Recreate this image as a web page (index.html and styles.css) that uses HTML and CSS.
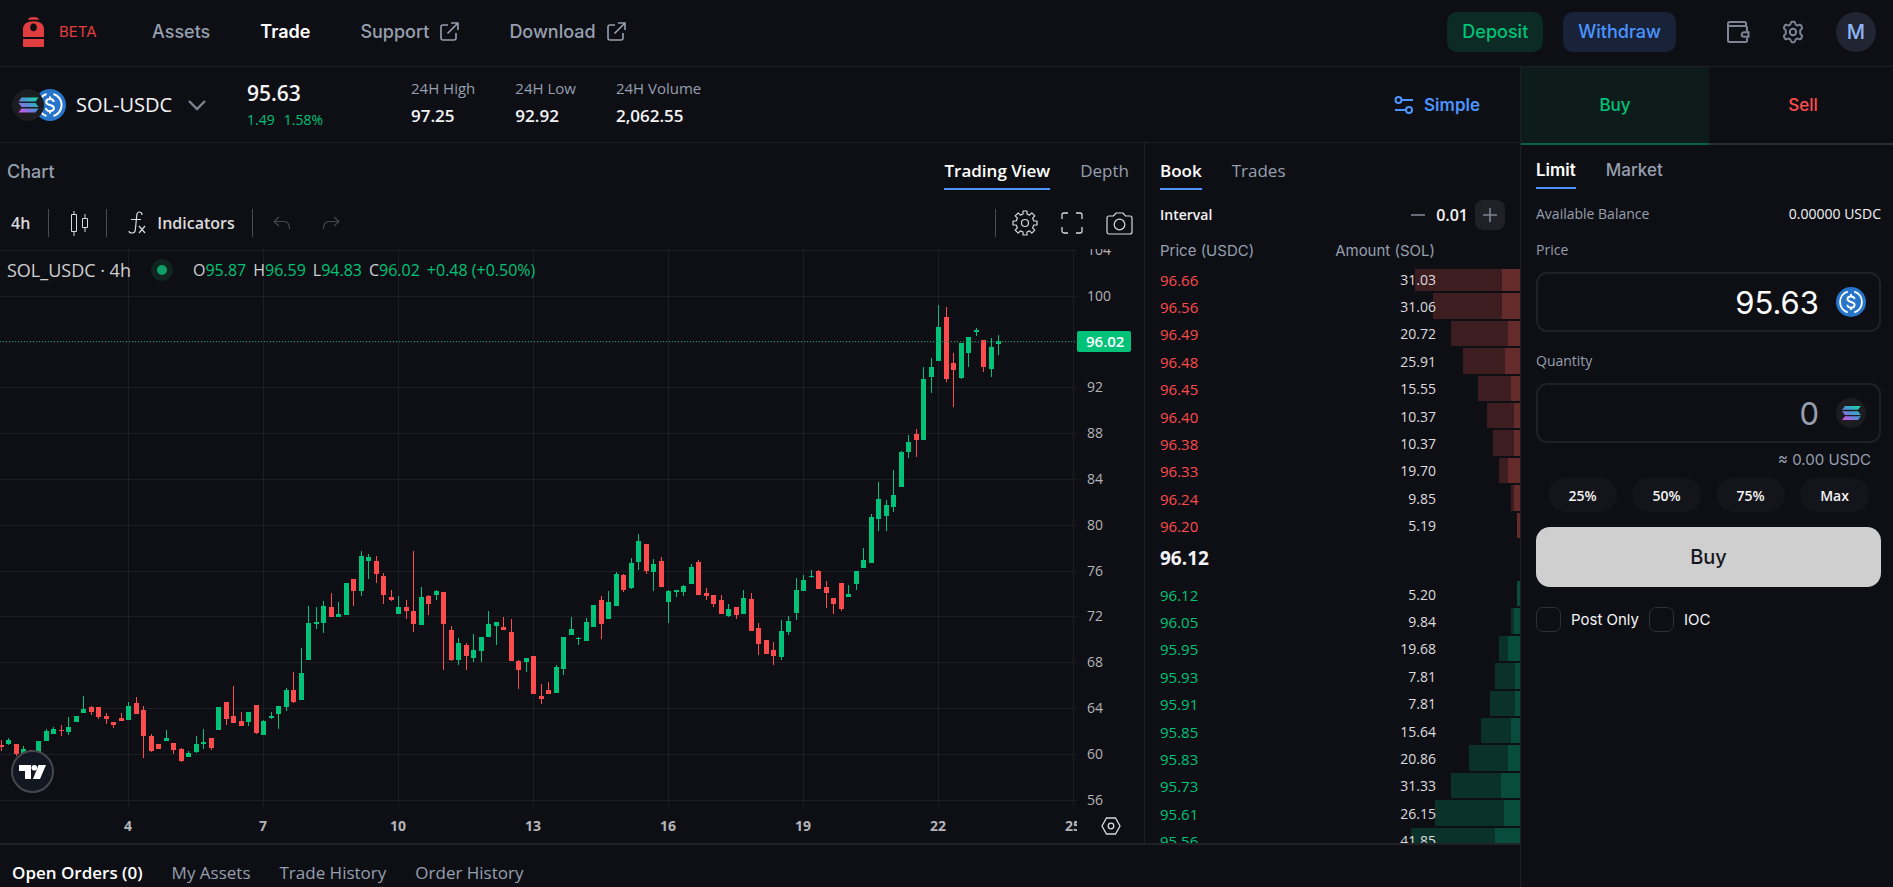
FILE: index.html
```html
<!DOCTYPE html>
<html lang="en">
<head>
  <meta charset="UTF-8" />
  <meta name="viewport" content="width=device-width, initial-scale=1.0" />
  <title>SOL-USDC | Trade</title>
  <link rel="stylesheet" href="styles.css">
</head>
<body>
  <!-- shared symbols -->
  <svg class="defs" aria-hidden="true">
    <defs>
      <linearGradient id="sol-gradient" x1="0" y1="1" x2="1" y2="0">
        <stop offset="0" stop-color="#e04be8" />
        <stop offset="0.5" stop-color="#4f8fd6" />
        <stop offset="1" stop-color="#0fe0a4" />
      </linearGradient>
      <symbol id="icon-sol" viewBox="0 0 32 32">
        <circle cx="16" cy="16" r="16" fill="#1c1c21" />
        <path d="M10 9h17l-3 4H7zM7 14.5h17l3 4H10zM10 20h17l-3 4H7z" transform="translate(-0.5 -0.5)" fill="url(#sol-gradient)" />
      </symbol>
      <symbol id="icon-usdc" viewBox="0 0 32 32">
        <circle cx="16" cy="16" r="16" fill="#2775ca" />
        <path d="M12.5 5a11.5 11.5 0 0 0 0 22M19.500 5a11.500 11.500 0 0 1 0 22" fill="none" stroke="#fff" stroke-width="2" />
        <path d="M16 7.500v2.500M16 22v2.500M19.800 13c-.2-1.900-1.700-2.900-3.800-2.900s-3.800 1-3.800 2.800c0 4.200 7.700 2 7.700 6.200 0 1.800-1.700 2.900-3.900 2.900s-3.900-1.100-4-3" fill="none" stroke="#fff" stroke-width="2" />
      </symbol>
      <symbol id="icon-external" viewBox="0 0 20 20">
        <path d="M9 3H4a2 2 0 0 0-2 2v11a2 2 0 0 0 2 2h11a2 2 0 0 0 2-2v-5M12 1h7v7M19 1 8.500 11.500" fill="none" stroke="currentColor" stroke-width="1.600" />
      </symbol>
    </defs>
  </svg>

  <header class="topbar">
    <a class="logo" href="#">
      <svg width="21" height="30" viewBox="0 0 21 30" aria-hidden="true">
        <path d="M5 2.700c.5-2 2.500-2.700 5.500-2.700S15.500.7 16 2.700z" />
        <path fill-rule="evenodd" d="M0 19v-6.500C0 7 4 4.300 10.500 4.300S21 7 21 12.500V19a1 1 0 0 1-1 1H1a1 1 0 0 1-1-1zM10.500 6.600a3.300 3.800 0 1 0 0 7.600 3.300 3.800 0 0 0 0-7.600z" />
        <path d="M0 22h21v7a1 1 0 0 1-1 1H1a1 1 0 0 1-1-1z" />
      </svg>
      <span>BETA</span>
    </a>
    <nav class="nav">
      <a href="#">Assets</a>
      <a href="#" class="active">Trade</a>
      <a href="#">Support <svg width="20" height="20"><use href="#icon-external" /></svg></a>
      <a href="#">Download <svg width="20" height="20"><use href="#icon-external" /></svg></a>
    </nav>
    <div class="actions">
      <button class="btn deposit">Deposit</button>
      <button class="btn withdraw">Withdraw</button>
      <button class="icon-btn wallet" aria-label="Wallet">
        <svg width="24" height="24" viewBox="0 0 24 24" fill="none" stroke="currentColor" stroke-width="2">
          <path d="M20 7V3.500A1.500 1.500 0 0 0 18.500 2H3.500A1.500 1.500 0 0 0 2 3.500v17A1.500 1.500 0 0 0 3.500 22h16a1.500 1.500 0 0 0 1.500-1.500V18M2 6h17a2 2 0 0 1 2 2v4M18 12.200h4.500v4.600H18a2.300 2.300 0 0 1 0-4.600z" />
        </svg>
      </button>
      <button class="icon-btn" aria-label="Settings">
        <svg width="24" height="24" viewBox="0 0 24 24" fill="none" stroke="currentColor" stroke-width="2" stroke-linejoin="round">
          <path d="M9.600 3.900c.2-1.100.6-2.100 1.300-2.100h2.200c.7 0 1.100 1 1.300 2.100.1.700.9 1.200 1.500 1.400 1 .4 1.600-.2 2.600-.5.700-.2 1.100 0 1.400.5l1.100 1.900c.3.600.2 1-.3 1.500-.8.700-1.500 1.200-1.500 2v2.600c0 .8.700 1.300 1.500 2 .5.500.6.900.3 1.500l-1.100 1.900c-.3.500-.7.700-1.400.5-1-.3-1.600-.9-2.600-.5-.6.200-1.400.7-1.500 1.400-.2 1.100-.6 2.100-1.300 2.100h-2.200c-.7 0-1.100-1-1.300-2.100-.1-.7-.9-1.200-1.500-1.400-1-.4-1.600.2-2.600.5-.7.2-1.100 0-1.400-.5L3 16.800c-.3-.6-.2-1 .3-1.500.8-.7 1.500-1.200 1.500-2v-2.600c0-.8-.7-1.300-1.500-2-.5-.5-.6-.9-.3-1.500l1.100-1.900c.3-.5.7-.7 1.400-.5 1 .3 1.600.9 2.600.5.600-.2 1.400-.7 1.500-1.400z" />
          <circle cx="12" cy="12" r="3.200" />
        </svg>
      </button>
      <button class="avatar">M</button>
    </div>
  </header>

  <main class="layout">
    <section class="market">
      <div class="ticker">
        <button class="pair">
          <span class="pair-icons">
            <svg width="32" height="32"><use href="#icon-sol" /></svg>
            <svg width="32" height="32"><use href="#icon-usdc" /></svg>
          </span>
          <span>SOL-USDC</span>
          <svg width="20" height="12" viewBox="0 0 20 12" fill="none" stroke="#7d8494" stroke-width="2.400"><path d="m2 2 8 8 8-8" /></svg>
        </button>
        <div class="last">
          <strong>95.63</strong>
          <p><span>1.49</span><span>1.58%</span></p>
        </div>
        <dl class="stats">
          <div><dt>24H High</dt><dd>97.25</dd></div>
          <div><dt>24H Low</dt><dd>92.92</dd></div>
          <div><dt>24H Volume</dt><dd>2,062.55</dd></div>
        </dl>
        <button class="simple">
          <svg width="20" height="20" viewBox="0 0 20 20" fill="none" stroke="currentColor" stroke-width="2">
            <circle cx="4.500" cy="5" r="3" /><path d="M8 5h11" />
            <circle cx="15" cy="15" r="3" /><path d="M1 15h11" />
          </svg>
          Simple
        </button>
      </div>

      <div class="panels">
        <section class="chart">
          <div class="chart-head">
            <h2>Chart</h2>
            <div class="tabs">
              <button class="tab active">Trading View</button>
              <button class="tab">Depth</button>
            </div>
          </div>
          <div class="toolbar">
            <button class="interval">4h</button>
            <i class="sep"></i>
            <button class="candles" aria-label="Candles">
              <svg width="18" height="26" viewBox="0 0 18 26" fill="none" stroke="currentColor"><path d="M.5 4.500h5v17h-5zM3 1v3M3 22v4M11.500 8.500h5v9h-5zM14 4v4M14 18v4" /></svg>
            </button>
            <i class="sep"></i>
            <button class="indicators">
              <svg width="18" height="24" viewBox="0 0 18 24" fill="none" stroke="currentColor" stroke-width="1.200"><path d="M14 4V3.500C14 2 13 1 11.500 1S9 2 8.800 4L7.300 19c-.2 2-1.300 3-3 3S1 21.500 1 20M3 8.500h10M11 15l6 7M17 15l-6 7" /></svg>
              Indicators
            </button>
            <i class="sep"></i>
            <button class="history undo" aria-label="Undo">
              <svg width="18" height="14" viewBox="0 0 18 14" fill="none" stroke="currentColor" stroke-width="1.200"><path d="M6 1 1 5.500 6 10M1 5.500h10c3.500 0 5.500 2.500 5.500 7.500" /></svg>
            </button>
            <button class="history" aria-label="Redo">
              <svg width="18" height="14" viewBox="0 0 18 14" fill="none" stroke="currentColor" stroke-width="1.200"><path d="m12 1 5 4.500L12 10M17 5.500H7C3.500 5.500 1.500 8 1.500 13" /></svg>
            </button>
            <div class="toolbar-right">
              <i class="sep"></i>
              <button aria-label="Chart settings">
                <svg width="26" height="26" viewBox="0 0 26 26" fill="none" stroke="currentColor" stroke-width="1.200">
                  <path d="M11 1h4v3l2.600 1.100 2.200-2.200 3 3-2.200 2.200L21.800 11H25v4h-3.200l-1.200 2.900 2.200 2.200-3 3-2.200-2.200L15 22v3h-4v-3l-2.600-1.100-2.200 2.200-3-3 2.200-2.200L4.200 15H1v-4h3.200l1.200-2.900-2.200-2.200 3-3 2.200 2.200L11 4z" stroke-linejoin="round" />
                  <circle cx="13" cy="13" r="3.500" />
                </svg>
              </button>
              <button aria-label="Fullscreen">
                <svg width="22" height="22" viewBox="0 0 22 22" fill="none" stroke="currentColor" stroke-width="1.300"><path d="M1 7V3a2 2 0 0 1 2-2h4M15 1h4a2 2 0 0 1 2 2v4M21 15v4a2 2 0 0 1-2 2h-4M7 21H3a2 2 0 0 1-2-2v-4" /></svg>
              </button>
              <button aria-label="Snapshot">
                <svg width="27" height="23" viewBox="0 0 27 23" fill="none" stroke="currentColor" stroke-width="1.200"><path d="M1 20V6a2 2 0 0 1 2-2h4.500L10 1h7l2.500 3H24a2 2 0 0 1 2 2v14a2 2 0 0 1-2 2H3a2 2 0 0 1-2-2z" /><circle cx="13.500" cy="12.500" r="5.300" /></svg>
              </button>
            </div>
          </div>
          <div class="plot">
            <svg id="plot" role="img" aria-label="SOL_USDC price chart"></svg>
            <div class="legend">
              <span class="symbol">SOL_USDC · 4h</span>
              <i class="live"></i>
              <span>O<b>95.87</b></span>
              <span>H<b>96.59</b></span>
              <span>L<b>94.83</b></span>
              <span>C<b>96.02</b></span>
              <span><b>+0.48 (+0.50%)</b></span>
            </div>
            <a class="tv-logo" href="#" aria-label="TradingView">
              <svg width="27" height="14" viewBox="0 0 27 14" fill="#fff"><path d="M0 0h12v14H6V6H0zM19.500 0H27l-6 14h-7z" /><circle cx="15.300" cy="2.800" r="2.800" /></svg>
            </a>
            <button class="axis-settings" aria-label="Scale settings">
              <svg width="20" height="18" viewBox="0 0 20 18" fill="none" stroke="currentColor" stroke-width="1.300"><path d="M5.500 1h9L19 9l-4.500 8h-9L1 9z" /><circle cx="10" cy="9" r="2.800" /></svg>
            </button>
          </div>
        </section>

        <section class="book">
          <div class="tabs">
            <button class="tab active">Book</button>
            <button class="tab">Trades</button>
          </div>
          <div class="book-interval">
            <span>Interval</span>
            <div class="stepper">
              <button aria-label="Decrease"><svg width="16" height="16" viewBox="0 0 16 16"><path d="M1 8h14" stroke="currentColor" stroke-width="1.600" /></svg></button>
              <output>0.01</output>
              <button class="plus" aria-label="Increase"><svg width="16" height="16" viewBox="0 0 16 16"><path d="M1 8h14M8 1v14" stroke="currentColor" stroke-width="1.600" /></svg></button>
            </div>
          </div>
          <div class="book-head"><span>Price (USDC)</span><span>Amount (SOL)</span></div>
          <div class="book-body">
            <table class="levels asks" id="asks"></table>
            <p class="mid">96.12</p>
            <table class="levels bids" id="bids"></table>
          </div>
        </section>
      </div>

      <div class="orders-tabs">
        <button class="active">Open Orders (0)</button>
        <button>My Assets</button>
        <button>Trade History</button>
        <button>Order History</button>
      </div>
    </section>

    <aside class="ticket">
      <div class="sides">
        <button class="side buy">Buy</button>
        <button class="side sell">Sell</button>
      </div>
      <form class="form">
        <div class="tabs">
          <button type="button" class="tab active">Limit</button>
          <button type="button" class="tab">Market</button>
        </div>
        <p class="balance"><span>Available Balance</span><span>0.00000 USDC</span></p>
        <label for="price">Price</label>
        <div class="field">
          <input id="price" type="text" value="95.63">
          <svg width="30" height="30"><use href="#icon-usdc" /></svg>
        </div>
        <label for="quantity">Quantity</label>
        <div class="field">
          <input id="quantity" type="text" placeholder="0">
          <svg width="30" height="30"><use href="#icon-sol" /></svg>
        </div>
        <p class="approx">≈ 0.00 USDC</p>
        <div class="percents">
          <button type="button">25%</button>
          <button type="button">50%</button>
          <button type="button">75%</button>
          <button type="button">Max</button>
        </div>
        <button type="button" class="submit">Buy</button>
        <div class="options">
          <input type="checkbox" id="post-only"><label for="post-only">Post Only</label>
          <input type="checkbox" id="ioc"><label for="ioc">IOC</label>
        </div>
      </form>
    </aside>
  </main>

  <script src="script.js"></script>
</body>
</html>
```
FILE: styles.css
```css
* { box-sizing: border-box; margin: 0; padding: 0; }

:root {
  --bg: #0e0f14;
  --line: #202127;
  --text: #f4f4f6;
  --muted: #969faf;
  --green: #00c278;
  --red: #fd4b4e;
  --blue: #4c94ff;
  --ui: "Open Sans", "Noto Sans", sans-serif;
  --inter: Inter, "Noto Sans", sans-serif;
}

body {
  height: 100vh;
  display: flex;
  flex-direction: column;
  overflow: hidden;
  background: var(--bg);
  color: var(--text);
  font: 14px/20px var(--ui);
}

button { background: none; border: 0; color: inherit; font: inherit; cursor: pointer; }
a { color: inherit; text-decoration: none; }
svg { display: block; flex: none; }
.defs { position: absolute; width: 0; height: 0; }

/* top bar */
.topbar {
  display: flex;
  align-items: center;
  height: 67px;
  padding: 0 17px 3px 23px;
  border-bottom: 1px solid var(--line);
  font-family: var(--inter);
}
.logo { display: flex; align-items: center; gap: 15px; width: 129px; color: #e33e3f; font-size: 15px; }
.logo svg { fill: #e33e3f; }
.nav { display: flex; gap: 50px; font-size: 18px; font-weight: 500; color: var(--muted); }
.nav a { display: flex; align-items: center; gap: 10px; }
.nav .active { color: #fff; font-weight: 600; }
.actions { display: flex; align-items: center; margin-left: auto; }
.btn { height: 40px; padding: 0 15px; border-radius: 10px; font-size: 18px; font-weight: 500; }
.deposit { background: #0c2b25; color: var(--green); margin-right: 20px; }
.withdraw { background: #18233a; color: var(--blue); margin-right: 50px; }
.icon-btn { color: #7d8494; margin-right: 31px; }
.avatar { width: 40px; height: 40px; border-radius: 50%; background: #202433; color: #90b5f5; font-size: 20px; font-weight: 500; }

/* page grid */
.layout { flex: 1; min-height: 0; display: grid; grid-template-columns: minmax(0, 1fr) 373px; }
.market { display: flex; flex-direction: column; min-height: 0; }

/* ticker */
.ticker { display: flex; align-items: center; height: 76px; padding: 0 40px 0 12px; border-bottom: 1px solid var(--line); }
.pair { display: flex; align-items: center; width: 235px; font-size: 20px; font-weight: 500; }
.pair > svg { margin-left: 15px; }
.pair-icons { display: flex; margin-right: 10px; }
.pair-icons svg:first-child { position: relative; z-index: 1; margin-right: -10px; }
.last { width: 164px; padding-top: 3px; }
.last strong { display: block; font-size: 21px; line-height: 28px; font-weight: 600; }
.last p { display: flex; gap: 9px; color: var(--green); font-weight: 500; line-height: 26px; }
.stats { display: flex; gap: 40px; padding-bottom: 5px; }
.stats dt { color: var(--muted); font-size: 15px; line-height: 28px; }
.stats dd { font-size: 17px; font-weight: 600; line-height: 28px; }
.simple { display: flex; align-items: center; gap: 10px; margin-left: auto; color: var(--blue); font: 600 17px/24px var(--inter); }

.panels { flex: 1; min-height: 0; display: grid; grid-template-columns: minmax(0, 1fr) 375px; border-bottom: 2px solid var(--line); }

/* tabs */
.tabs { display: flex; gap: 30px; }
.tab { padding: 0 0 5px; border-bottom: 2px solid transparent; color: var(--muted); font-size: 17px; line-height: 24px; font-weight: 500; }
.tab.active { color: #fff; border-color: var(--blue); font-weight: 600; }

/* chart */
.chart { display: flex; flex-direction: column; min-height: 0; border-right: 1px solid var(--line); }
.chart-head { display: flex; justify-content: space-between; padding: 16px 15px 0 7px; }
.chart-head h2 { color: var(--muted); font: 500 18px/26px var(--inter); }
.toolbar { display: flex; align-items: center; height: 59px; padding: 7px 11px 0; color: #dadadd; font-size: 16px; font-weight: 600; }
.sep { width: 1px; height: 28px; background: #4b4c50; }
.interval { margin-right: 18px; }
.candles { margin: 0 17px 0 22px; }
.indicators { display: flex; align-items: center; gap: 11px; margin: 0 17px 0 21px; }
.history { color: #46474c; margin-left: 31px; }
.undo { margin-left: 20px; }
.toolbar-right { display: flex; align-items: center; gap: 23px; margin-left: auto; }
.toolbar-right .sep { margin-right: -7px; }
.plot { flex: 1; min-height: 0; position: relative; }
#plot { width: 100%; height: 100%; }
#plot text { font: 14px var(--ui); fill: #b4b4b8; }
#plot .time { font-weight: 700; text-anchor: middle; }
#plot .tag { fill: #fff; font-size: 15px; font-weight: 600; }
.grid-line { stroke: #1d1e23; }
.up { fill: var(--green); }
.down { fill: var(--red); }
.price-line { stroke: #129a68; stroke-dasharray: 1 2; }
.legend { position: absolute; top: 8px; left: 7px; display: flex; align-items: center; gap: 7px; color: #d0d0d3; font-size: 16px; line-height: 26px; }
.legend b { font-weight: 400; color: var(--green); }
.legend .symbol { font-size: 18px; }
.live { width: 22px; height: 22px; margin: 0 13px; border: 6px solid #10251f; border-radius: 50%; background: #0e9f69; }
.tv-logo { position: absolute; left: 11px; bottom: 50px; width: 43px; height: 43px; display: grid; place-items: center; border: 2px solid #46474d; border-radius: 50%; background: #131722; }
.axis-settings { position: absolute; right: 23px; bottom: 8px; color: #dadadd; }

/* order book */
.book { display: flex; flex-direction: column; min-height: 0; }
.book .tabs { padding: 16px 15px 0; }
.book-interval { display: flex; align-items: center; justify-content: space-between; height: 46px; padding: 4px 15px 0; font-weight: 600; }
.stepper { display: flex; align-items: center; color: #7d8494; }
.stepper output { margin: 0 7px 0 10px; color: var(--text); font-size: 16px; }
.plus { display: grid; place-items: center; width: 30px; height: 30px; border-radius: 8px; background: #202127; }
.book-head { display: flex; justify-content: space-between; margin-bottom: 3px; padding: 0 85px 0 15px; color: var(--muted); font: 15px/30px var(--inter); }
.book-body { flex: 1; min-height: 0; overflow: hidden; }
.levels { width: 100%; height: 274px; border-collapse: collapse; }
.asks { margin-top: -3px; }
.levels tr { position: relative; }
.levels td { padding: 0; line-height: 20px; }
.levels td:first-child { padding-left: 15px; font-size: 15px; font-weight: 500; }
.levels td:nth-child(2) { position: relative; z-index: 1; padding-right: 84px; text-align: right; color: #dcdcdf; }
.asks td:first-child { color: var(--red); }
.bids td:first-child { color: var(--green); }
.depth { width: 0; }
.depth i { position: absolute; top: 0; right: 0; bottom: 2px; }
.asks .total { background: #3d1d20; }
.asks .size { background: #652a2a; }
.bids .total { background: #0b312b; }
.bids .size { background: #084c3d; }
.mid { margin-bottom: 5px; padding-left: 15px; font-size: 19px; font-weight: 700; line-height: 36px; }

/* orders */
.orders-tabs { display: flex; gap: 29px; height: 42px; padding: 14px 12px 0; color: var(--muted); font-size: 17px; font-weight: 500; }
.orders-tabs .active { color: #fff; font-weight: 600; }

/* order ticket */
.ticket { border-left: 1px solid var(--line); overflow: hidden; font-family: var(--inter); }
.sides { display: flex; }
.side { flex: 1 0 188px; height: 78px; border-bottom: 2px solid #2c2d33; font-size: 17px; font-weight: 500; }
.buy { background: #0d1c1b; border-color: #056443; color: var(--green); }
.sell { color: var(--red); }
.form { padding: 13px 12px 0 15px; }
.balance { display: flex; justify-content: space-between; margin: 15px 0 16px; font-family: var(--ui); }
.balance span:first-child, .form > label { color: var(--muted); }
.form > label { display: block; font-family: var(--ui); }
.field { display: flex; align-items: center; gap: 17px; height: 60px; margin: 12px 0 19px; padding: 0 13px; border: 2px solid var(--line); border-radius: 11px; }
.field input { flex: 1; min-width: 0; background: none; border: 0; outline: 0; color: #fff; font: 31px var(--inter); text-align: right; }
.field input::placeholder { color: var(--muted); opacity: 1; }
.approx { margin: -12px 10px 8px; color: var(--muted); text-align: right; font-size: 15px; }
.percents { display: flex; justify-content: space-between; padding: 0 12px; }
.percents button { width: 69px; height: 34px; border-radius: 17px; background: #14151a; font: 600 14px var(--ui); }
.submit { display: block; width: 100%; height: 60px; margin: 15px 0 20px; border-radius: 14px; background: #cfcfcf; color: #16171c; font-size: 20px; font-weight: 500; }
.options { display: flex; align-items: center; gap: 10px; font-size: 15px; }
.options input { appearance: none; width: 25px; height: 25px; border: 1px solid #2f3036; border-radius: 7px; }
```
FILE: script.js
```js
const SVG = "http://www.w3.org/2000/svg";
const STEP = 7.5;
const LAST_TICK = 126; // bar index of the right-most date label
const AXIS_W = 67;
const AXIS_H = 36;

// direction, high, body top, body bottom, low (px from the top of the plot)
const candles = `
d 491 496 498 502|u 489 491 495 496|d 495 495 505 507|u 497 500 505 507|d 501 501 503 503|u 492 492 504 504|u 480 482 492 492
u 478 480 485 485|d 476 481 482 487|u 468 478 483 486|u 467 467 473 473|u 447 460 464 464|d 457 458 463 466|d 458 458 468 470
d 464 467 470 475|d 473 473 476 479|d 464 469 472 472|u 453 457 471 471|d 448 454 465 465|d 457 461 487 509|d 485 487 502 503
d 495 495 500 500|u 481 489 492 492|d 494 494 501 505|d 499 500 512 513|u 502 504 508 508|u 487 495 503 504|u 480 493 495 500
d 489 489 499 501|u 458 458 481 481|d 453 453 470 476|d 437 467 474 474|d 463 472 477 477|u 463 463 473 477|d 456 456 484 485
u 471 472 486 486|u 463 467 469 470|u 457 457 465 480|u 439 441 458 462|d 423 441 453 454|u 399 424 451 451|u 357 374 411 411
u 358 373 375 380|u 352 357 374 384|d 344 358 368 368|u 353 365 368 368|u 334 334 366 366|d 330 330 342 357|u 302 307 342 347
u 305 308 312 330|d 307 312 325 334|d 324 327 346 355|d 341 348 351 352|u 347 358 365 365|d 351 358 362 370|d 302 362 375 383
u 338 348 376 376|d 346 347 355 366|u 341 342 346 351|d 343 343 375 421|d 377 381 411 412|u 389 394 411 416|d 394 396 407 421
u 385 401 409 413|u 388 388 402 413|u 362 375 388 388|u 373 373 377 396|d 368 378 381 381|d 370 383 412 412|d 411 412 421 440
u 409 409 413 423|d 407 407 445 445|d 435 447 450 455|d 433 441 445 445|u 416 418 444 444|u 388 388 420 426|u 368 380 386 386
u 388 389 390 396|u 369 373 392 392|u 356 356 378 378|d 347 351 375 390|u 342 353 370 370|u 323 325 357 357|d 325 326 341 343
u 309 314 339 340|u 285 292 313 321|d 295 295 322 325|u 310 315 323 342|d 308 312 338 338|u 341 342 353 374|u 341 341 343 348
u 336 337 343 347|u 315 318 335 335|d 311 313 346 346|d 339 344 347 351|d 346 346 355 358|d 346 351 365 365|u 355 360 367 368
d 358 358 366 370|u 341 349 365 365|d 344 350 382 382|d 374 379 395 406|d 391 391 405 405|d 393 401 407 416|u 371 382 408 411
u 367 372 383 386|u 329 341 364 371|u 326 331 342 342|u 321 327 328 329|d 321 322 340 340|d 332 338 344 359|d 349 349 355 365
d 334 334 360 362|u 336 345 348 348|u 322 322 335 341|u 299 311 319 319|u 265 268 314 314|u 233 250 270 282|u 251 256 267 282
u 221 246 258 263|u 202 203 238 238|u 186 193 203 209|d 180 185 191 208|u 118 130 191 191|u 109 118 128 144|u 56 78 112 112
d 58 68 130 133|d 104 114 121 158|u 94 94 129 130|u 88 88 104 118|u 79 81 83 87|d 91 91 118 123|u 89 98 120 128|u 86 92 95 106
`.trim().split(/[|\n]/).map(c => c.split(" "));

const FIRST_INDEX = -17;

function add(parent, name, attrs, text) {
  const node = document.createElementNS(SVG, name);
  for (const key in attrs) node.setAttribute(key, attrs[key]);
  if (text !== undefined) node.textContent = text;
  parent.appendChild(node);
  return node;
}

function drawChart() {
  const root = document.getElementById("plot");
  root.innerHTML = "";
  const width = root.clientWidth - AXIS_W;
  const height = root.clientHeight - AXIS_H;
  const x = index => Math.round(width - 4 - (LAST_TICK - index) * STEP);
  const clip = add(root, "svg", { width: width, height: root.clientHeight });

  // price scale
  for (let i = 0; i <= 12; i++) {
    const y = Math.round(1 + i * 45.8) + 0.5;
    add(clip, "line", { x1: 0, x2: width, y1: y, y2: y, class: "grid-line" });
    if (i !== 2) add(root, "text", { x: width + 10, y: y + 4.5 }, 104 - i * 4);
  }

  // time scale
  for (let day = 4, i = 0; day <= 25; day += 3, i += 18) {
    add(clip, "line", { x1: x(i) + 0.5, x2: x(i) + 0.5, y1: 0, y2: height, class: "grid-line" });
    add(clip, "text", { x: x(i), y: height + 24, class: "time" }, day);
  }

  candles.forEach(([dir, high, top, bottom, low], i) => {
    const cls = dir === "u" ? "up" : "down";
    const cx = x(FIRST_INDEX + i);
    add(clip, "rect", { x: cx, y: high, width: 1, height: low - high, class: cls });
    add(clip, "rect", { x: cx - 2, y: top, width: 5, height: bottom - top, class: cls });
  });

  add(clip, "line", { x1: 0, x2: width, y1: 92.5, y2: 92.5, class: "price-line" });
  add(root, "rect", { x: width, y: 82, width: 54, height: 21, rx: 2, class: "up" });
  add(root, "text", { x: width + 9, y: 98, class: "tag" }, "96.02");
}

// price, amount, total bar, size bar
const asks = [
  ["96.66", "31.03", 105, 18],
  ["96.56", "31.06", 87, 18],
  ["96.49", "20.72", 69, 12],
  ["96.48", "25.91", 57, 15],
  ["96.45", "15.55", 42, 9],
  ["96.40", "10.37", 33, 6],
  ["96.38", "10.37", 27, 6],
  ["96.33", "19.70", 21, 12],
  ["96.24", "9.85", 9, 6],
  ["96.20", "5.19", 3, 3]
];
const bids = [
  ["96.12", "5.20", 3, 3],
  ["96.05", "9.84", 9, 6],
  ["95.95", "19.68", 21, 12],
  ["95.93", "7.81", 25, 5],
  ["95.91", "7.81", 30, 5],
  ["95.85", "15.64", 39, 9],
  ["95.83", "20.86", 51, 12],
  ["95.73", "31.33", 69, 19],
  ["95.61", "26.15", 85, 16],
  ["95.56", "41.85", 109, 25]
];

function drawLevels(id, levels) {
  document.getElementById(id).innerHTML = levels.map(([price, amount, total, size]) => `
    <tr>
      <td>${price}</td>
      <td>${amount}</td>
      <td class="depth"><i class="total" style="width:${total}px"></i><i class="size" style="width:${size}px"></i></td>
    </tr>`).join("");
}

drawLevels("asks", asks);
drawLevels("bids", bids);
drawChart();
window.addEventListener("resize", drawChart);
```
